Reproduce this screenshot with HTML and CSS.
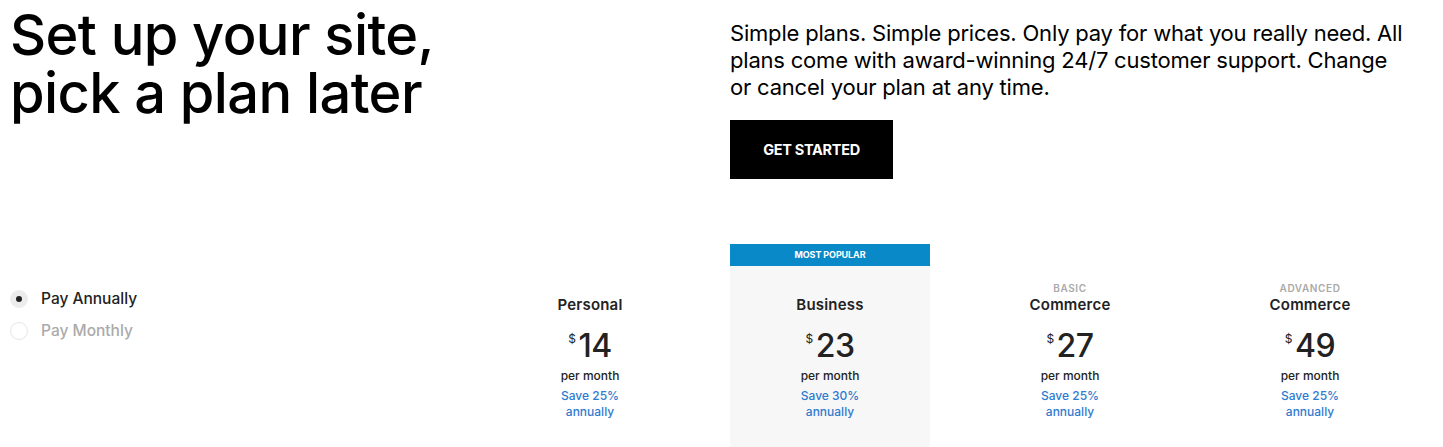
FILE: index.html
```html
<!DOCTYPE html>
<html lang="en">
<head>
<meta charset="utf-8">
<title>Pricing</title>
<link rel="stylesheet" href="styles.css">
</head>
<body>
<section class="intro">
  <h1 class="title">Set up your site,<br>pick a plan later</h1>
  <div class="intro-side">
    <p class="lead">Simple plans. Simple prices. Only pay for what you really need. All plans come with award-winning 24/7 customer support. Change or cancel your plan at any time.</p>
    <a class="cta" href="#">GET STARTED</a>
  </div>
</section>
<section class="pricing">
  <div class="billing">
    <label class="opt opt-on"><span class="radio"><span class="dot"></span></span><span>Pay Annually</span></label>
    <label class="opt opt-off"><span class="radio"></span><span>Pay Monthly</span></label>
  </div>
  <div class="plans">
    <div class="plan">
      <div class="badge-space"></div>
      <div class="plan-body">
        <div class="tier"></div>
        <div class="name">Personal</div>
        <div class="price"><span class="cur">$</span>14</div>
        <div class="per">per month</div>
        <div class="save">Save 25%<br>annually</div>
      </div>
    </div>
    <div class="plan plan-featured">
      <div class="card">
        <div class="badge">MOST POPULAR</div>
        <div class="plan-body">
          <div class="tier"></div>
          <div class="name">Business</div>
          <div class="price"><span class="cur">$</span>23</div>
          <div class="per">per month</div>
          <div class="save">Save 30%<br>annually</div>
        </div>
      </div>
    </div>
    <div class="plan">
      <div class="badge-space"></div>
      <div class="plan-body">
        <div class="tier">BASIC</div>
        <div class="name">Commerce</div>
        <div class="price"><span class="cur">$</span>27</div>
        <div class="per">per month</div>
        <div class="save">Save 25%<br>annually</div>
      </div>
    </div>
    <div class="plan">
      <div class="badge-space"></div>
      <div class="plan-body">
        <div class="tier">ADVANCED</div>
        <div class="name">Commerce</div>
        <div class="price"><span class="cur">$</span>49</div>
        <div class="per">per month</div>
        <div class="save">Save 25%<br>annually</div>
      </div>
    </div>
  </div>
</section>
</body>
</html>
```
FILE: styles.css
```css
* { box-sizing: border-box; }
html, body { margin: 0; padding: 0; background: #fff; }
body {
  font-family: "Inter", "Liberation Sans", sans-serif;
  color: #222;
  overflow: hidden;
  height: 447px;
}

.intro {
  display: grid;
  grid-template-columns: 720px 1fr;
  padding: 0 10px;
}
.title {
  margin: 6px 0 0;
  font-size: 56px;
  line-height: 58px;
  font-weight: 500;
  letter-spacing: -0.6px;
  color: #000;
}
.intro-side { padding-top: 20px; }
.lead {
  margin: 0;
  width: 680px;
  font-size: 22px;
  line-height: 27px;
  letter-spacing: -0.2px;
  color: #000;
}
.cta {
  display: flex;
  align-items: center;
  justify-content: center;
  width: 163px;
  height: 59px;
  margin-top: 19px;
  background: #000;
  color: #fff;
  text-decoration: none;
  font-size: 14.5px;
  font-weight: 700;
  letter-spacing: -0.3px;
}

.pricing {
  display: grid;
  grid-template-columns: 470px 960px;
  margin-top: 65px;
}
.billing {
  padding: 46px 0 0 10px;
  display: flex;
  flex-direction: column;
  gap: 14px;
}
.opt {
  display: flex;
  align-items: center;
  gap: 13px;
  font-size: 15.5px;
  font-weight: 500;
  line-height: 18px;
}
.opt-on { color: #222; }
.opt-off { color: #aaa; }
.radio {
  width: 18px;
  height: 18px;
  border-radius: 50%;
  display: flex;
  align-items: center;
  justify-content: center;
}
.opt-on .radio { background: #ececec; }
.opt-off .radio { border: 1px solid #e6e6e6; background: #fff; }
.dot { width: 6px; height: 6px; border-radius: 50%; background: #222; }

.plans {
  display: grid;
  grid-template-columns: repeat(4, 240px);
}
.plan { text-align: center; }
.plan-featured { padding: 0 20px; }
.card { background: #f7f7f7; height: 220px; }
.badge {
  height: 22px;
  background: #0a89c9;
  color: #fff;
  font-size: 9px;
  font-weight: 700;
  line-height: 22px;
  letter-spacing: -0.1px;
}
.badge-space { height: 22px; }
.plan-body { padding-top: 15px; }
.tier {
  height: 14px;
  font-size: 10px;
  line-height: 14px;
  font-weight: 600;
  letter-spacing: 0.6px;
  color: #aaa;
}
.name {
  font-size: 15px;
  line-height: 20px;
  font-weight: 600;
  letter-spacing: 0.2px;
  color: #222;
}
.price {
  margin-top: 13px;
  font-size: 32px;
  line-height: 36px;
  font-weight: 500;
  color: #222;
  letter-spacing: -0.5px;
}
.cur {
  font-size: 12px;
  vertical-align: top;
  line-height: 22px;
  margin-right: 3px;
  font-weight: 400;
}
.per {
  margin-top: 3px;
  font-size: 12px;
  line-height: 18px;
  font-weight: 500;
}
.save {
  margin-top: 3px;
  font-size: 12px;
  line-height: 16px;
  color: #2f7bcf;
  font-weight: 500;
}
```
